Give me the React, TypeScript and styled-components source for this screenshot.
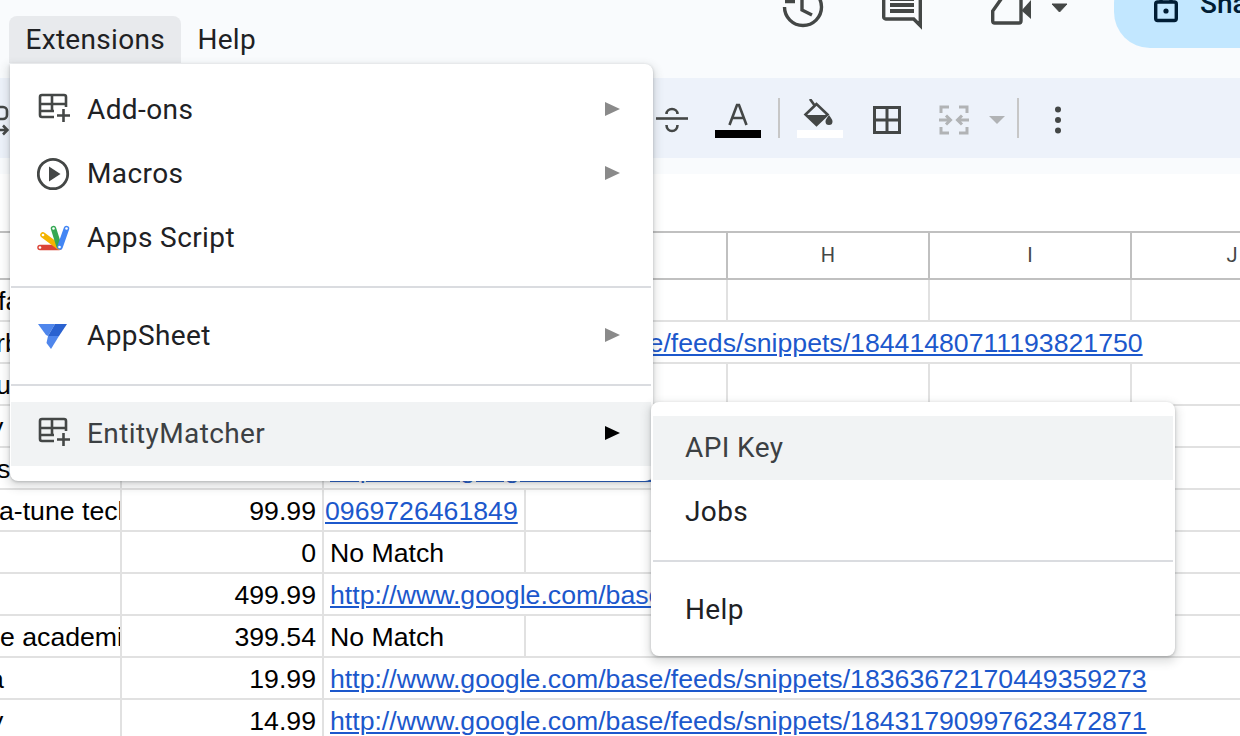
import React from 'react';
import { createGlobalStyle, styled } from 'styled-components';

const GRID_LINE = '#e1e1e1';
const HEADER_LINE = '#c0c0c0';

type CellKind = 'text' | 'link' | 'clip';

interface RowData {
  label: string;
  indent: number;
  price?: string;
  kind?: CellKind;
  value?: string;
}

const LINK_A = 'http://www.google.com/base/feeds/snippets/';

const rows: RowData[] = [
  { label: 'fa', indent: -2 },
  { label: 'rb', indent: -4, price: '29.99', kind: 'link', value: `${LINK_A}18441480711193821750` },
  { label: 'ut', indent: -4 },
  { label: 'y', indent: -10 },
  { label: 'so', indent: -3, price: '49.99', kind: 'link', value: `${LINK_A}18441110047404795849` },
  { label: 'a-tune tech', indent: -1, price: '99.99', kind: 'clip', value: '0969726461849' },
  { label: '', indent: 0, price: '0', kind: 'text', value: 'No Match' },
  { label: '', indent: 0, price: '499.99', kind: 'link', value: `${LINK_A}18245950143021882105` },
  { label: 'e academi', indent: 0, price: '399.54', kind: 'text', value: 'No Match' },
  { label: 'a', indent: -11, price: '19.99', kind: 'link', value: `${LINK_A}18363672170449359273` },
  { label: 'y', indent: -10, price: '14.99', kind: 'link', value: `${LINK_A}18431790997623472871` },
];

const GlobalStyle = createGlobalStyle`
  html, body {
    margin: 0;
    padding: 0;
    background: #ffffff;
  }
  * {
    box-sizing: border-box;
  }
`;

const Page = styled.div`
  position: relative;
  width: 1240px;
  height: 736px;
  overflow: hidden;
  background: #ffffff;
  font-family: Roboto, 'Liberation Sans', sans-serif;
`;

const Header = styled.header`
  height: 78px;
  background: #f9fbfd;
  display: flex;
  justify-content: space-between;
  overflow: hidden;
`;

const MenuBar = styled.nav`
  display: flex;
  align-items: stretch;
  height: 47px;
  margin: 16px 0 0 9px;
`;

const MenuTab = styled.div<{ $open?: boolean }>`
  display: flex;
  align-items: center;
  padding: 0 16px 0 16.5px;
  font-size: 28px;
  letter-spacing: 0.3px;
  color: #202124;
  border-radius: 8px 8px 0 0;
  background: ${(p) => (p.$open ? '#e8eaed' : 'transparent')};
`;

const Actions = styled.div`
  display: flex;
  align-items: center;
  height: 80px;
  margin-top: -32px;
`;

const ActionIcon = styled.svg<{ $left: number }>`
  flex: none;
  margin-left: ${(p) => p.$left}px;
  fill: none;
  stroke: #444746;
`;

const ShareButton = styled.div`
  display: flex;
  align-items: center;
  flex: none;
  width: 126px;
  height: 80px;
  margin-left: 45px;
  padding-left: 40px;
  border-radius: 36px 0 0 36px;
  background: #c2e7ff;
  color: #001d35;
  font-size: 28px;
  font-weight: 500;
  overflow: hidden;
`;

const ShareIcon = styled.svg`
  flex: none;
`;

const ShareText = styled.span`
  flex: none;
  margin: -10px 0 0 22px;
`;

const Toolbar = styled.div`
  display: flex;
  align-items: center;
  height: 80px;
  padding-top: 4px;
  background: #edf2fa;
`;

const ToolIcon = styled.svg<{ $left: number }>`
  flex: none;
  margin-left: ${(p) => p.$left}px;
`;

const ToolDivider = styled.div<{ $left: number }>`
  flex: none;
  width: 2px;
  height: 40px;
  margin: -4px 0 0 ${(p) => p.$left}px;
  background: #c7c7c7;
`;

const FormulaStrip = styled.div`
  height: 16px;
  background: #f9fbfd;
`;

const FormulaGap = styled.div`
  height: 57px;
  background: #ffffff;
`;

const SheetGrid = styled.div`
  display: grid;
  grid-template-columns: 122px repeat(6, 202px);
  grid-template-rows: 47px;
  grid-auto-rows: 42px;
  border-top: 2px solid ${HEADER_LINE};
`;

const ColumnHead = styled.div`
  display: flex;
  align-items: center;
  justify-content: center;
  padding-bottom: 2px;
  border-right: 2px solid ${HEADER_LINE};
  border-bottom: 2px solid ${HEADER_LINE};
  color: #444746;
  font-size: 20px;
  font-family: Roboto, sans-serif;
`;

const Cell = styled.div<{ $span?: number; $bare?: boolean }>`
  grid-column: span ${(p) => p.$span ?? 1};
  display: flex;
  align-items: center;
  padding-top: 3px;
  overflow: hidden;
  white-space: nowrap;
  border-bottom: 2px solid ${GRID_LINE};
  border-right: ${(p) => (p.$bare ? 'none' : `2px solid ${GRID_LINE}`)};
  font-family: 'Liberation Sans', Arial, sans-serif;
  font-size: 26.67px;
  color: #000000;
`;

const LabelText = styled.span<{ $indent: number }>`
  flex: none;
  margin-left: ${(p) => p.$indent}px;
`;

const NumberCell = styled(Cell)`
  justify-content: flex-end;
  padding-right: 6px;
`;

const PlainValue = styled.span`
  padding-left: 6px;
`;

const LinkValue = styled.a<{ $flush?: boolean }>`
  flex: none;
  padding-left: ${(p) => (p.$flush ? 1 : 6)}px;
  color: #1c58cc;
  text-decoration: underline;
`;

const Menu = styled.div`
  position: absolute;
  z-index: 3;
  background: #ffffff;
  border-radius: 8px;
  box-shadow: 0 4px 8px 3px rgba(60, 64, 67, 0.15), 0 1px 3px rgba(60, 64, 67, 0.3);
`;

const MainMenu = styled(Menu)`
  left: 10px;
  top: 64px;
  width: 643px;
  height: 417px;
  padding: 14px 2px 15px 1px;
  border-top-left-radius: 0;
`;

const SubMenu = styled(Menu)`
  left: 651px;
  top: 402px;
  width: 524px;
  height: 254px;
  padding: 14px 2px;
`;

const MenuRow = styled.div<{ $active?: boolean; $sub?: boolean }>`
  position: relative;
  display: flex;
  align-items: center;
  height: 64px;
  padding: 0 0 2px ${(p) => (p.$sub ? 32 : 76)}px;
  background: ${(p) => (p.$active ? '#f1f3f4' : 'transparent')};
  color: ${(p) => (p.$active ? '#3c4043' : '#202124')};
  font-size: 28px;
  letter-spacing: 0.4px;
`;

const RowIcon = styled.svg`
  position: absolute;
  left: 26px;
  top: 14px;
`;

const Arrow = styled.span<{ $dark?: boolean }>`
  position: absolute;
  left: 594px;
  top: 24px;
  border-style: solid;
  border-width: 7px 0 7px 15px;
  border-color: transparent transparent transparent ${(p) => (p.$dark ? '#000000' : '#8a8a8a')};
`;

const Separator = styled.div`
  height: 2px;
  margin: 16px 0;
  background: #dadce0;
`;

function AddonIcon() {
  return (
    <RowIcon width="36" height="36" viewBox="0 0 36 36" fill="none" stroke="#444746" strokeWidth="2.6">
      <path d="M17 25H5a2 2 0 0 1-2-2V5a2 2 0 0 1 2-2h22a2 2 0 0 1 2 2v10" />
      <path d="M3 12h26M3 19h14M15 3v16" />
      <path d="M26.500 17v13M20 23.500h13" />
    </RowIcon>
  );
}

function MacroIcon() {
  return (
    <RowIcon width="36" height="36" viewBox="0 0 36 36" fill="none">
      <circle cx="16" cy="18" r="14.700" stroke="#444746" strokeWidth="2.800" />
      <path d="M12 10.500 23.500 18 12 25.500z" fill="#444746" />
    </RowIcon>
  );
}

function ScriptIcon() {
  return (
    <RowIcon width="36" height="36" viewBox="0 0 36 36" fill="none" strokeWidth="5.500" strokeLinecap="round">
      <path d="M3 27.500h19" stroke="#db4437" />
      <path d="M6 15 22 27" stroke="#f4b400" />
      <path d="M16.500 8.500 22 26" stroke="#34a853" />
      <path d="M29.500 8.500 23 27" stroke="#4285f4" />
      <g fill="#ffffff">
        <circle cx="3" cy="27.500" r="1.300" />
        <circle cx="6" cy="15" r="1.300" />
        <circle cx="16.500" cy="8.500" r="1.300" />
        <circle cx="29.500" cy="8.500" r="1.300" />
        <circle cx="22.500" cy="27" r="1.300" />
      </g>
    </RowIcon>
  );
}

function AppSheetIcon() {
  return (
    <RowIcon width="36" height="36" viewBox="0 0 36 36">
      <path d="M1 6h17l-7 12-2-1z" fill="#4f86ec" />
      <path d="M11 18h11L14 31l-4.500-6z" fill="#4f86ec" />
      <path d="M18 6h12l-8 12H11z" fill="#2a62d0" />
    </RowIcon>
  );
}

export default function App() {
  return (
    <Page>
      <GlobalStyle />
      <Header>
        <MenuBar>
          <MenuTab $open>Extensions</MenuTab>
          <MenuTab>Help</MenuTab>
        </MenuBar>
        <Actions>
          <ActionIcon $left={0} width="44" height="44" viewBox="0 0 44 44" strokeWidth="3.400">
            <path d="M3.500 21a18.500 18.500 0 1 0 18.500-18.500" />
            <path d="M4 15.500h10M21 10v14l10 5" />
          </ActionIcon>
          <ActionIcon $left={56} width="44" height="44" viewBox="0 0 44 44" strokeWidth="3.400">
            <path d="M2.700 0v31a2 2 0 0 0 2 2h28l6.600 6.600V0" />
            <path d="M33 35h8v7z" fill="#444746" stroke="none" />
            <path d="M9 13h24M9 19h24M9 25h24" strokeWidth="4" />
          </ActionIcon>
          <ActionIcon $left={66} width="44" height="44" viewBox="0 0 44 44" strokeWidth="3.400">
            <path d="M13 9 1.700 25v10a2 2 0 0 0 2 2H28a2 2 0 0 0 2-2V0" />
            <path d="M31 24 40 14v19l-9-8z" fill="#444746" stroke="none" />
          </ActionIcon>
          <ActionIcon $left={16} width="18" height="12" viewBox="0 0 18 12" stroke="none">
            <path d="M1 2h15l-7.500 8z" fill="#444746" />
          </ActionIcon>
          <ShareButton>
            <ShareIcon width="24" height="44" viewBox="0 0 24 44" fill="none" stroke="#001d35" strokeWidth="3.400">
              <rect x="1.700" y="16" width="20.600" height="18.500" rx="2" />
              <path d="M7 16v-5h10v5" />
              <circle cx="12" cy="25" r="2.600" fill="#001d35" stroke="none" />
            </ShareIcon>
            <ShareText>Share</ShareText>
          </ShareButton>
        </Actions>
      </Header>

      <Toolbar>
        <ToolIcon $left={0} width="9" height="40" viewBox="0 0 9 40" fill="none" stroke="#444746" strokeWidth="2.600">
          <path d="M-2 7h5a4 4 0 0 1 4 4v4a4 4 0 0 1-4 4h-5" />
          <path d="M-2 30h9M3 25.500l4.500 4.500L3 34.500" />
        </ToolIcon>
        <ToolIcon $left={647} width="32" height="40" viewBox="0 0 32 40" fill="none" stroke="#444746" strokeWidth="2.600">
          <path d="M0 18.500h32" />
          <path d="M10.500 14c0-3 2.500-5 5.500-5s5.500 2 5.500 5" />
          <path d="M10.500 25c0 3.500 2.500 6 5.500 6s5.500-2.500 5.500-6" />
        </ToolIcon>
        <ToolIcon $left={27} width="46" height="42" viewBox="0 0 46 42">
          <path d="M14.500 26 22 6h2l7.500 20M17.500 19h11" fill="none" stroke="#444746" strokeWidth="2.600" />
          <rect x="0" y="31" width="46" height="8" fill="#000000" />
        </ToolIcon>
        <ToolDivider $left={17} />
        <ToolIcon $left={17} width="46" height="42" viewBox="0 0 46 42">
          <path d="M13 0 18 7M19.500 5 8.500 15.500l11 10.500 11-10.500z" fill="none" stroke="#444746" strokeWidth="2.600" />
          <path d="M9 16h21L19.500 26z" fill="#444746" />
          <path d="M32 16c2 3 3.500 4.600 3.500 6.500a3.500 3.500 0 0 1-7 0c0-1.900 1.500-3.500 3.500-6.500z" fill="#444746" />
          <rect x="0" y="31" width="46" height="8" fill="#ffffff" />
        </ToolIcon>
        <ToolIcon $left={29} width="30" height="30" viewBox="0 0 30 30" fill="none" stroke="#444746" strokeWidth="3">
          <path d="M2.500 2.500h25v25h-25zM15 2.500v25M2.500 15h25" />
        </ToolIcon>
        <ToolIcon $left={36} width="32" height="30" viewBox="0 0 32 30" fill="none" stroke="#b1b3b5" strokeWidth="3">
          <path d="M11 2H3v6M3 22v6h8M21 2h8v6M29 22v6h-8" />
          <path d="M1 15h11M8 10.500l4.500 4.500L8 19.500M31 15H20M24 10.500 19.500 15l4.500 4.500" />
        </ToolIcon>
        <ToolIcon $left={19} width="16" height="10" viewBox="0 0 16 10">
          <path d="M0 1h16l-8 8z" fill="#b1b3b5" />
        </ToolIcon>
        <ToolDivider $left={12} />
        <ToolIcon $left={33} width="12" height="28" viewBox="0 0 12 28" fill="#444746">
          <circle cx="6" cy="3.500" r="3" />
          <circle cx="6" cy="14" r="3" />
          <circle cx="6" cy="24.500" r="3" />
        </ToolIcon>
      </Toolbar>
      <FormulaStrip />
      <FormulaGap />

      <SheetGrid>
        <ColumnHead />
        <ColumnHead />
        <ColumnHead />
        <ColumnHead />
        <ColumnHead>H</ColumnHead>
        <ColumnHead>I</ColumnHead>
        <ColumnHead>J</ColumnHead>
        {rows.map((row, idx) => (
          <React.Fragment key={idx}>
            <Cell>
              <LabelText $indent={row.indent}>{row.label}</LabelText>
            </Cell>
            <NumberCell>{row.price}</NumberCell>
            {row.kind === 'link' ? (
              <Cell $span={5} $bare>
                <LinkValue>{row.value}</LinkValue>
              </Cell>
            ) : (
              <>
                <Cell>
                  {row.kind === 'text' && <PlainValue>{row.value}</PlainValue>}
                  {row.kind === 'clip' && <LinkValue $flush>{row.value}</LinkValue>}
                </Cell>
                <Cell />
                <Cell />
                <Cell />
                <Cell $bare />
              </>
            )}
          </React.Fragment>
        ))}
      </SheetGrid>

      <MainMenu>
        <MenuRow>
          <AddonIcon />
          Add-ons
          <Arrow />
        </MenuRow>
        <MenuRow>
          <MacroIcon />
          Macros
          <Arrow />
        </MenuRow>
        <MenuRow>
          <ScriptIcon />
          Apps Script
        </MenuRow>
        <Separator />
        <MenuRow>
          <AppSheetIcon />
          AppSheet
          <Arrow />
        </MenuRow>
        <Separator />
        <MenuRow $active>
          <AddonIcon />
          EntityMatcher
          <Arrow $dark />
        </MenuRow>
      </MainMenu>

      <SubMenu>
        <MenuRow $sub $active>API Key</MenuRow>
        <MenuRow $sub>Jobs</MenuRow>
        <Separator />
        <MenuRow $sub>Help</MenuRow>
      </SubMenu>
    </Page>
  );
}
